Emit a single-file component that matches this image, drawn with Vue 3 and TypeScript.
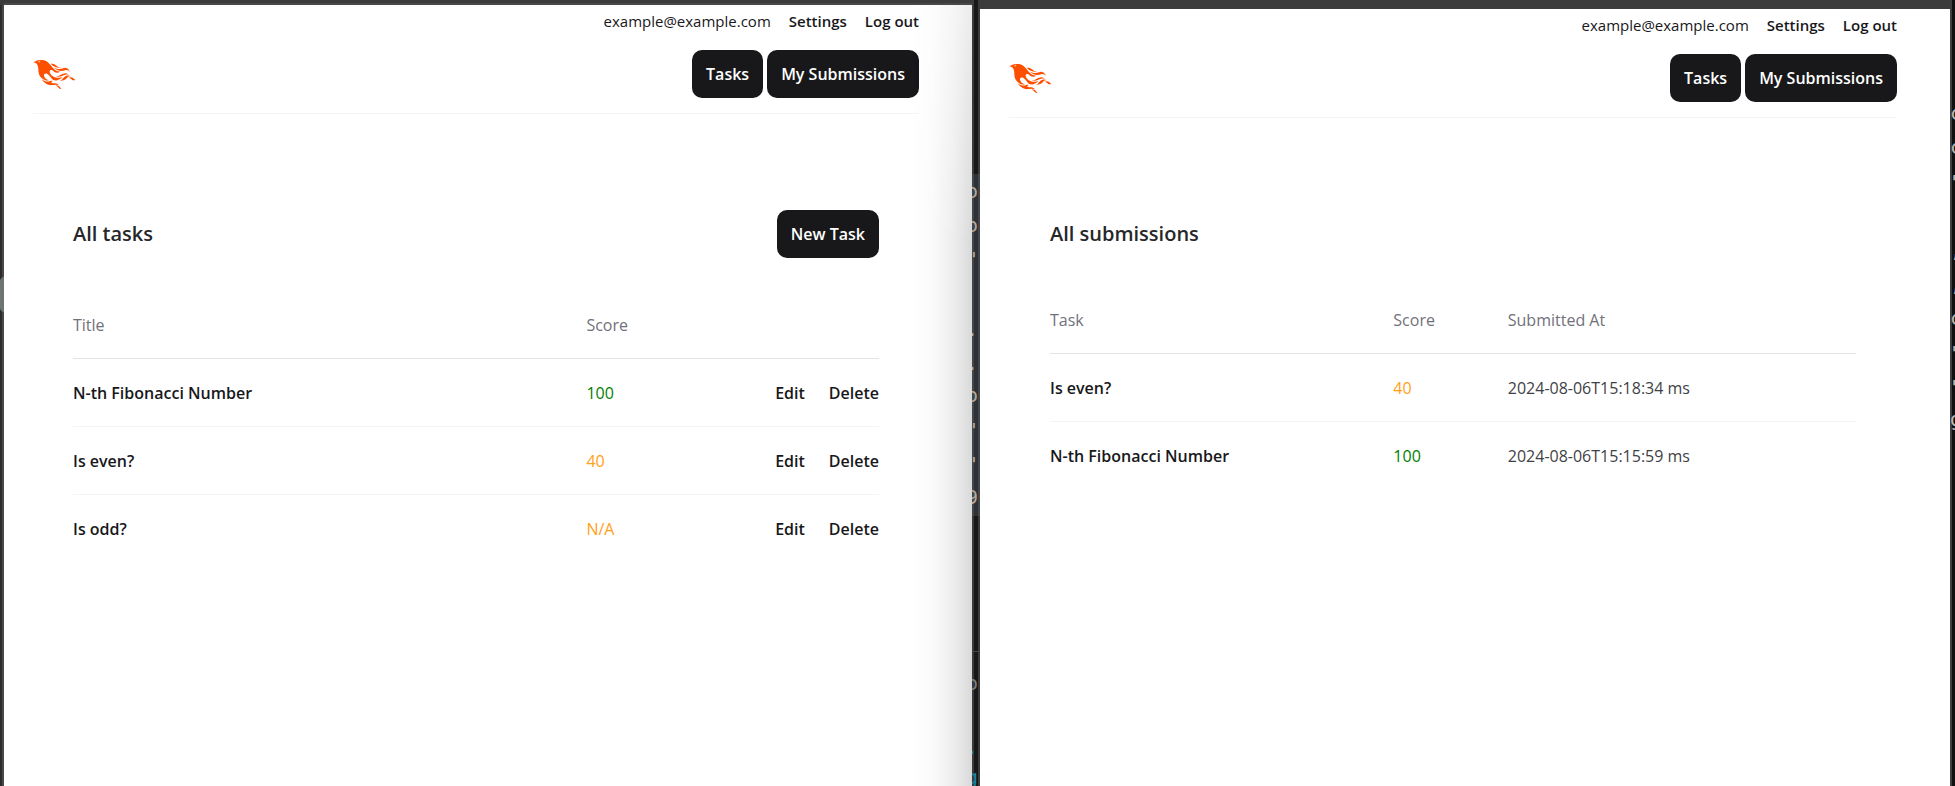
<script setup lang="ts">
interface Task {
  title: string
  score: string
  tone: string
}
interface Submission extends Task {
  submittedAt: string
}
interface Sliver {
  text: string
  top: number
  tone: string
}

const tasks: Task[] = [
  { title: 'N-th Fibonacci Number', score: '100', tone: 'full' },
  { title: 'Is even?', score: '40', tone: 'partial' },
  { title: 'Is odd?', score: 'N/A', tone: 'partial' },
]

const submissions: Submission[] = [
  { title: 'Is even?', score: '40', tone: 'partial', submittedAt: '2024-08-06T15:18:34 ms' },
  { title: 'N-th Fibonacci Number', score: '100', tone: 'full', submittedAt: '2024-08-06T15:15:59 ms' },
]

const account = 'example@example.com'

const gapCode: Sliver[] = [
  { text: 'o', top: 176, tone: 'tan' },
  { text: 'o', top: 210, tone: 'tan' },
  { text: '"', top: 244, tone: 'tan' },
  { text: '.', top: 314, tone: 'tan' },
  { text: '.', top: 348, tone: 'tan' },
  { text: 'o', top: 380, tone: 'tan' },
  { text: '"', top: 415, tone: 'tan' },
  { text: '"', top: 449, tone: 'tan' },
  { text: '9', top: 482, tone: 'tan' },
  { text: 'o', top: 668, tone: 'grey' },
  { text: '.', top: 732, tone: 'teal' },
  { text: 'g', top: 762, tone: 'teal' },
]

const edgeCode: Sliver[] = [
  { text: 'c', top: 98, tone: 'light' },
  { text: 'c', top: 132, tone: 'light' },
  { text: '"', top: 167, tone: 'light' },
  { text: ',', top: 235, tone: 'light' },
  { text: ',', top: 269, tone: 'light' },
  { text: 'c', top: 303, tone: 'light' },
  { text: '"', top: 338, tone: 'light' },
  { text: '"', top: 372, tone: 'light' },
  { text: 'g', top: 404, tone: 'light' },
]

const phoenix =
  'm26.371 33.477-.552-.1c-3.92-.729-6.397-3.1-7.57-6.829-.733-2.324.597-4.035 3.035-4.148 1.995-.092 3.362 1.055 4.57 2.39 1.557 1.72 2.984 3.558 4.514 5.305 2.202 2.515 4.797 4.134 8.347 3.634 3.183-.448 5.958-1.725 8.371-3.828.363-.316.761-.592 1.144-.886l-.241-.284c-2.027.63-4.093.841-6.205.735-3.195-.16-6.24-.828-8.964-2.582-2.486-1.601-4.319-3.746-5.19-6.611-.704-2.315.736-3.934 3.135-3.6.948.133 1.746.56 2.463 1.165.583.493 1.143 1.015 1.738 1.493 2.8 2.25 6.712 2.375 10.265-.068-5.842-.026-9.817-3.24-13.308-7.313-1.366-1.594-2.7-3.216-4.095-4.785-2.698-3.036-5.692-5.71-9.79-6.623C12.8-.623 7.745.14 2.893 2.361 1.926 2.804.997 3.319 0 4.149c.494 0 .763.006 1.032 0 2.446-.064 4.28 1.023 5.602 3.024.962 1.457 1.415 3.104 1.761 4.798.513 2.515.247 5.078.544 7.605.761 6.494 4.08 11.026 10.26 13.346 2.267.852 4.591 1.135 7.172.555ZM10.751 3.852c-.976.246-1.756-.148-2.56-.962 1.377-.343 2.592-.476 3.897-.528-.107.848-.607 1.306-1.336 1.49Zm32.002 37.924c-.085-.626-.62-.901-1.04-1.228-1.857-1.446-4.03-1.958-6.333-2-1.375-.026-2.735-.128-4.031-.61-.595-.22-1.26-.505-1.244-1.272.015-.78.693-1 1.31-1.184.505-.15 1.026-.247 1.6-.382-1.46-.936-2.886-1.065-4.787-.3-2.993 1.202-5.943 1.06-8.926-.017-1.684-.608-3.179-1.563-4.735-2.408l-.077.057c1.29 2.115 3.034 3.817 5.004 5.271 3.793 2.8 7.936 4.471 12.784 3.73A66.714 66.714 0 0 1 37 40.877c1.98-.16 3.866.398 5.753.899Zm-9.14-30.345c-.105-.076-.206-.266-.42-.069 1.745 2.36 3.985 4.098 6.683 5.193 4.354 1.767 8.773 2.07 13.293.51 3.51-1.21 6.033-.028 7.343 3.38.19-3.955-2.137-6.837-5.843-7.401-2.084-.318-4.01.373-5.962.94-5.434 1.575-10.485.798-15.094-2.553Zm27.085 15.425c.708.059 1.416.123 2.124.185-1.6-1.405-3.55-1.517-5.523-1.404-3.003.17-5.167 1.903-7.14 3.972-1.739 1.824-3.31 3.87-5.903 4.604.043.078.054.117.066.117.35.005.699.021 1.047.005 3.768-.17 7.317-.965 10.14-3.7.89-.86 1.685-1.817 2.544-2.71.716-.746 1.584-1.159 2.645-1.07Zm-8.753-4.67c-2.812.246-5.254 1.409-7.548 2.943-1.766 1.18-3.654 1.738-5.776 1.37-.374-.066-.75-.114-1.124-.17l-.013.156c.135.07.265.151.405.207.354.14.702.308 1.07.395 4.083.971 7.992.474 11.516-1.803 2.221-1.435 4.521-1.707 7.013-1.336.252.038.503.083.756.107.234.022.479.255.795.003-2.179-1.574-4.526-2.096-7.094-1.872Zm-10.049-9.544c1.475.051 2.943-.142 4.486-1.059-.452.04-.643.04-.827.076-2.126.424-4.033-.04-5.733-1.383-.623-.493-1.257-.974-1.889-1.457-2.503-1.914-5.374-2.555-8.514-2.5.05.154.054.26.108.315 3.417 3.455 7.371 5.836 12.369 6.008Zm24.727 17.731c-2.114-2.097-4.952-2.367-7.578-.537 1.738.078 3.043.632 4.101 1.728.374.388.763.768 1.182 1.106 1.6 1.29 4.311 1.352 5.896.155-1.861-.726-1.861-.726-3.601-2.452Zm-21.058 16.06c-1.858-3.46-4.981-4.24-8.59-4.008a9.667 9.667 0 0 1 2.977 1.39c.84.586 1.547 1.311 2.243 2.055 1.38 1.473 3.534 2.376 4.962 2.07-.656-.412-1.238-.848-1.592-1.507Z'
</script>

<template>
  <div class="desktop">
    <div class="strip strip-left" aria-hidden="true">
      <span class="box"></span>
    </div>

    <section class="window window-tasks">
      <nav class="account">
        <span class="email">{{ account }}</span>
        <a href="#settings">Settings</a>
        <a href="#logout">Log out</a>
      </nav>
      <header class="topbar">
        <a href="#home" class="logo" aria-label="Home">
          <svg viewBox="0 0 71 48" aria-hidden="true"><path :d="phoenix" fill="#fd4f00" /></svg>
        </a>
        <div class="actions">
          <button type="button" class="btn">Tasks</button>
          <button type="button" class="btn">My Submissions</button>
        </div>
      </header>
      <main class="content">
        <div class="heading">
          <h1>All tasks</h1>
          <button type="button" class="btn">New Task</button>
        </div>
        <table class="tasks">
          <thead>
            <tr>
              <th class="col-title">Title</th>
              <th>Score</th>
              <th class="col-actions"></th>
            </tr>
          </thead>
          <tbody>
            <tr v-for="task in tasks" :key="task.title">
              <td class="title">{{ task.title }}</td>
              <td :class="task.tone">{{ task.score }}</td>
              <td>
                <div class="row-actions">
                  <a href="#edit">Edit</a>
                  <a href="#delete">Delete</a>
                </div>
              </td>
            </tr>
          </tbody>
        </table>
      </main>
    </section>

    <div class="strip strip-gap" aria-hidden="true">
      <span class="selection"></span>
      <span class="divider"></span>
      <span
        v-for="s in gapCode"
        :key="s.top"
        class="sliver"
        :class="s.tone"
        :style="{ top: s.top + 'px' }"
      >{{ s.text }}</span>
    </div>

    <section class="window window-submissions">
      <nav class="account">
        <span class="email">{{ account }}</span>
        <a href="#settings">Settings</a>
        <a href="#logout">Log out</a>
      </nav>
      <header class="topbar">
        <a href="#home" class="logo" aria-label="Home">
          <svg viewBox="0 0 71 48" aria-hidden="true"><path :d="phoenix" fill="#fd4f00" /></svg>
        </a>
        <div class="actions">
          <button type="button" class="btn">Tasks</button>
          <button type="button" class="btn">My Submissions</button>
        </div>
      </header>
      <main class="content">
        <div class="heading">
          <h1>All submissions</h1>
        </div>
        <table class="submissions">
          <thead>
            <tr>
              <th class="col-task">Task</th>
              <th class="col-score">Score</th>
              <th>Submitted At</th>
            </tr>
          </thead>
          <tbody>
            <tr v-for="row in submissions" :key="row.title">
              <td class="title">{{ row.title }}</td>
              <td :class="row.tone">{{ row.score }}</td>
              <td>{{ row.submittedAt }}</td>
            </tr>
          </tbody>
        </table>
      </main>
    </section>

    <div class="strip strip-edge" aria-hidden="true">
      <span
        v-for="s in edgeCode"
        :key="s.top"
        class="sliver"
        :class="s.tone"
        :style="{ top: s.top + 'px' }"
      >{{ s.text }}</span>
    </div>
  </div>
</template>

<style>
body {
  margin: 0;
  background: #3b3b3b;
}
</style>

<style scoped>
.desktop {
  display: grid;
  grid-template-columns: 4px 968fr 8px 970fr 5px;
  min-height: 100vh;
  background: #3b3b3b;
  font-family: 'Open Sans', 'Noto Sans', sans-serif;
  font-size: 16px;
  line-height: 30px;
  color: #3f3f46;
}

.window {
  position: relative;
  box-sizing: border-box;
  background: #fff;
  padding: 0 53px 0 29px;
}
.window-tasks {
  margin-top: 5px;
  box-shadow: 0 -2px 0 #484848;
}
.window-submissions {
  margin-top: 9px;
}
.window-tasks::after {
  content: '';
  position: absolute;
  top: 0;
  right: 0;
  bottom: 0;
  width: 60px;
  background: linear-gradient(to left, rgba(0, 0, 0, 0.15), rgba(0, 0, 0, 0.07) 30%, rgba(0, 0, 0, 0.02) 65%, transparent);
  mask-image: linear-gradient(rgba(0, 0, 0, 0.5), #000 240px);
  pointer-events: none;
}

.account {
  display: flex;
  justify-content: flex-end;
  align-items: center;
  gap: 18px;
  height: 32px;
  font-size: 15px;
}
.account a {
  color: #18181b;
  font-weight: 600;
  text-decoration: none;
}
.email {
  color: #18181b;
}

.topbar {
  display: flex;
  align-items: center;
  justify-content: space-between;
  padding: 13px 0 15px;
  border-bottom: 1px solid #f4f4f5;
}
.logo {
  display: block;
}
.logo svg {
  display: block;
  width: 43px;
  height: 29px;
}
.actions {
  display: flex;
  gap: 4px;
}
.btn {
  height: 48px;
  padding: 0 14px;
  border: 0;
  border-radius: 10px;
  background: #18181b;
  color: #fff;
  font-family: inherit;
  font-size: 16px;
  font-weight: 600;
  line-height: 30px;
  white-space: nowrap;
}

.content {
  padding: 96px 40px;
}
.window-submissions .content {
  padding: 96px 41px;
}
.heading {
  display: flex;
  align-items: center;
  justify-content: space-between;
  min-height: 40px;
}
h1 {
  margin: 0;
  font-size: 20px;
  font-weight: 600;
  line-height: 40px;
  color: #27272a;
}

table {
  width: 100%;
  margin-top: 52px;
  border-collapse: collapse;
  table-layout: fixed;
}
.submissions {
  margin-top: 51px;
}
th,
td {
  padding: 0;
  text-align: left;
}
th {
  padding-bottom: 18px;
  font-weight: 400;
  color: #71717a;
  border-bottom: 1px solid #e4e4e7;
}
td {
  height: 67px;
  border-top: 1px solid #f4f4f5;
}
tbody tr:first-child td {
  border-top: 0;
}
.col-title {
  width: 63.7%;
}
.col-actions {
  width: 20%;
}
.col-task {
  width: 42.6%;
}
.col-score {
  width: 14.2%;
}
.title,
.row-actions a {
  font-weight: 600;
  color: #18181b;
}
.full {
  color: #008000;
}
.partial {
  color: #ffa01a;
}
.row-actions {
  display: flex;
  justify-content: flex-end;
  gap: 24px;
}
.row-actions a {
  text-decoration: none;
}

/* Editor code showing between and beside the windows */
.strip {
  position: relative;
  overflow: hidden;
}
.strip-left {
  margin-top: 5px;
  background: linear-gradient(to right, #2b2b2b 50%, #4a4846 50%);
}
.strip-gap {
  background: linear-gradient(to right, #3b3b3b 2px, #181818 2px 6px, #3b3b3b 6px);
}
.strip-edge {
  background: linear-gradient(to right, #3e3e3e 2px, #101010 2px);
}
.box {
  position: absolute;
  top: 272px;
  left: 0;
  width: 8px;
  height: 33px;
  border: 1px solid #60788a;
  border-radius: 4px;
  background: #76706a;
}
.selection {
  position: absolute;
  top: 174px;
  left: 0;
  right: 0;
  height: 342px;
  background: linear-gradient(to right, #44474a 2px, #2e3236 2px 6px, #44474a 6px);
}
.divider {
  position: absolute;
  top: 651px;
  left: 0;
  right: 0;
  height: 1px;
  background: #484848;
}
.sliver {
  position: absolute;
  right: 2px;
  font-family: 'DejaVu Sans Mono', monospace;
  font-size: 20px;
  line-height: 30px;
}
.strip-edge .sliver {
  right: auto;
  left: 0;
}
.tan {
  color: #b5a898;
}
.grey {
  color: #808080;
}
.teal {
  color: #1387a0;
}
.light {
  color: #b8b8b8;
}
</style>
